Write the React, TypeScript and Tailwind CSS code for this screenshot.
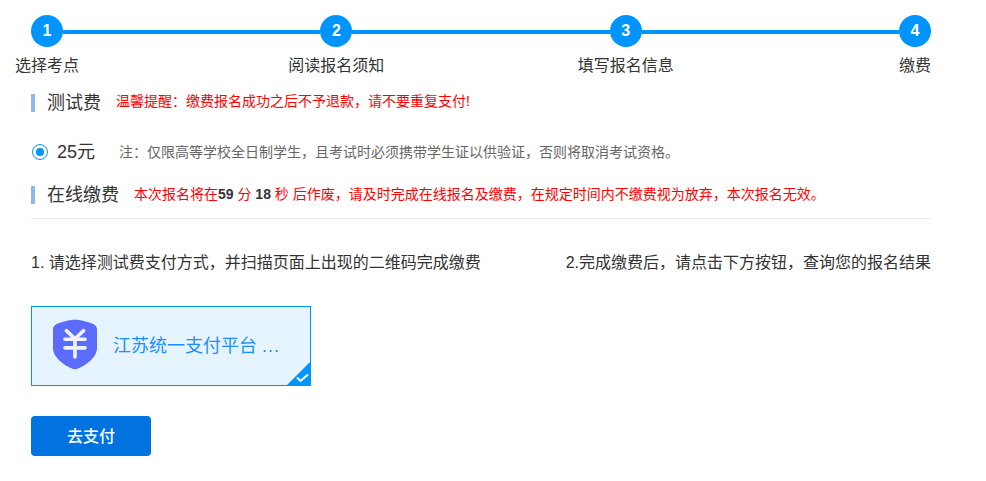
import React from 'react';

const STEPS: string[] = ['选择考点', '阅读报名须知', '填写报名信息', '缴费'];

const SectionTitle: React.FC<{ title: string; children: React.ReactNode }> = ({ title, children }) => (
  <div className="flex items-center h-[18px]">
    <span className="w-1 h-[18px] bg-[#8db9ec]" />
    <span className="ml-3 text-[18px] leading-[18px] text-[#333]">{title}</span>
    {children}
  </div>
);

const App: React.FC = () => {
  return (
    <div className="w-[986px] h-[481px] bg-white overflow-hidden font-['Liberation_Sans','Noto_Sans_CJK_SC',sans-serif]">
      <div className="w-[900px] ml-[31px] pt-[15px]">
        {/* 步骤条 */}
        <div className="flex">
          {STEPS.map((step, index) => (
            <React.Fragment key={step}>
              {index > 0 && <div className="flex-1 h-1 mt-[15px] bg-[#0094ff]" />}
              <div className="w-8 flex flex-col items-center">
                <div className="w-8 h-8 rounded-full bg-[#0094ff] text-white text-[16px] font-bold flex items-center justify-center">
                  {index + 1}
                </div>
                <div className="mt-[9px] text-[16px] leading-5 text-[#333] whitespace-nowrap">{step}</div>
              </div>
            </React.Fragment>
          ))}
        </div>

        <div className="mt-[18px]">
          <SectionTitle title="测试费">
            <span className="ml-[15px] mb-[3px] text-[14px] text-[#ff0000]">温馨提醒&#xFF1A;缴费报名成功之后不予退款&#xFF0C;请不要重复支付!</span>
          </SectionTitle>
        </div>

        <div className="flex items-center mt-[32px] h-4">
          <span className="ml-px w-4 h-4 rounded-full border border-[#0094ff] flex items-center justify-center">
            <span className="w-2 h-2 rounded-full bg-[#0094ff]" />
          </span>
          <span className="ml-[9px] text-[18px] text-[#333]">25元</span>
          <span className="ml-[24px] text-[14px] text-[#666]">注&#xFF1A;仅限高等学校全日制学生&#xFF0C;且考试时必须携带学生证以供验证&#xFF0C;否则将取消考试资格&#x3002;</span>
        </div>

        <div className="mt-[26px]">
          <SectionTitle title="在线缴费">
            <span className="ml-[15px] mb-[2px] text-[14px] text-[#ff0000]">
              本次报名将在<b className="text-[#333]">59</b> 分 <b className="text-[#333]">18</b> 秒 后作废&#xFF0C;请及时完成在线报名及缴费&#xFF0C;在规定时间内不缴费视为放弃&#xFF0C;本次报名无效&#x3002;
            </span>
          </SectionTitle>
        </div>

        <div className="mt-[14px] h-px bg-[#e9eef5]" />

        <div className="mt-[34px] flex justify-between text-[16px] leading-5 text-[#333]">
          <span>1. 请选择测试费支付方式&#xFF0C;并扫描页面上出现的二维码完成缴费</span>
          <span>2.完成缴费后&#xFF0C;请点击下方按钮&#xFF0C;查询您的报名结果</span>
        </div>

        {/* 支付方式 */}
        <div className="relative mt-[33px] w-[280px] h-20 border border-[#0094ff] bg-[#e6f4ff] flex items-center pl-[21px]">
          <svg width="44" height="51" viewBox="0 0 46 52" className="shrink-0 mb-[3px]">
            <path
              d="M23 0 C29 0 37 2.5 42 4.5 C44.5 5.5 46 7.5 46 10.5 L46 30 C46 40 33 49 25 51.5 C23.5 52 22.5 52 21 51.5 C13 49 0 40 0 30 L0 10.5 C0 7.5 1.5 5.5 4 4.5 C9 2.5 17 0 23 0 Z"
              fill="#5b6bfb"
            />
            <path
              d="M14 11.5 L23 20 L32 11.5 M12.5 20.5 L33.5 20.5 M12.5 29.5 L33.5 29.5 M23 20 L23 39"
              fill="none"
              stroke="#f0f2ff"
              strokeWidth="3.8"
              strokeLinecap="round"
              strokeLinejoin="round"
            />
          </svg>
          <span className="ml-4 text-[18px] text-[#1890ff] whitespace-nowrap">
            江苏统一支付平台 <span className="tracking-[1px]">...</span>
          </span>
          <svg width="25" height="25" viewBox="0 0 25 25" className="absolute -right-px -bottom-px">
            <path d="M25 0 L25 25 L0 25 Z" fill="#0094ff" />
            <path d="M11 16.5 L14.5 20 L22 13.5" fill="none" stroke="#ffffff" strokeWidth="2" />
          </svg>
        </div>

        <button className="mt-[30px] block w-[120px] h-10 pt-px rounded-[4px] bg-[#0073e0] text-white text-[16px] font-medium">
          去支付
        </button>
      </div>
    </div>
  );
};

export default App;
